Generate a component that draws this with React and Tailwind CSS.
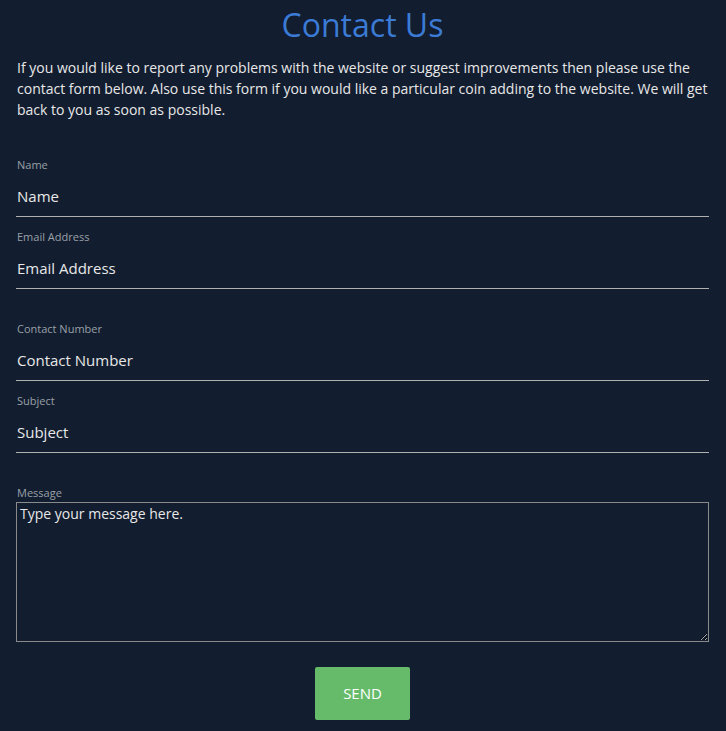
export default function App() {
  const font = { fontFamily: '"Open Sans", sans-serif' };
  const Field = ({ label, extra }) => (
    <div className={extra ? "mt-[32px]" : "mt-[12px]"}>
      <label className="block pl-[1px] text-[11px] leading-[16px] text-[#9aa0a8]">{label}</label>
      <input
        placeholder={label}
        className="block w-full h-[44px] bg-transparent border-0 border-b border-[#b0b0b0] pl-[1px] text-[15px] text-[#e8e8e8] placeholder:text-[#e8e8e8] outline-none pt-[2px]"
      />
    </div>
  );
  return (
    <div className="min-h-[731px] w-full bg-[#121d2f] pl-[16px] pr-[17px] font-['Open_Sans',sans-serif]" style={font}>
      <h1 className="text-center text-[32px] leading-[50px] text-[#3b7bd6] pt-0">Contact Us</h1>
      <p className="mt-[7px] pl-[1px] text-[14px] leading-[21px] text-[#e8e8e8]">
        If you would like to report any problems with the website or suggest improvements then please use the contact form below. Also use this form if you would like a particular coin adding to the website. We will get back to you as soon as possible.
      </p>
      <form className="mt-[37px]">
        <Field label="Name" extra={false} />
        <Field label="Email Address" extra={false} />
        <Field label="Contact Number" extra={true} />
        <Field label="Subject" extra={false} />
        <div className="mt-[32px]">
          <label className="block pl-[1px] text-[11px] leading-[16px] text-[#9aa0a8]">Message</label>
          <textarea
            placeholder="Type your message here."
            className="mt-[1px] block w-full h-[140px] bg-transparent border border-[#8a8a8a] text-[14px] text-[#e8e8e8] placeholder:text-[#e8e8e8] outline-none px-[3px] py-[1px] leading-[20px]"
          />
        </div>
        <div className="flex justify-center mt-[25px]">
          <button type="button" className="w-[95px] h-[53px] rounded-[2px] bg-[#66bb6a] text-white text-[15px]">SEND</button>
        </div>
      </form>
    </div>
  );
}
